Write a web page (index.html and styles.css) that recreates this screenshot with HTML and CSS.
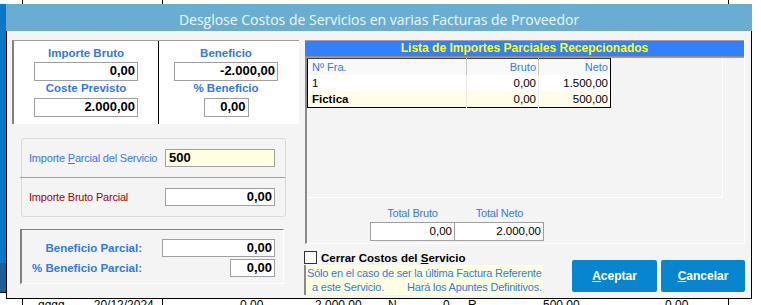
FILE: index.html
```html
<!DOCTYPE html>
<html lang="es">
<head>
  <meta charset="UTF-8">
  <title>Desglose Costos de Servicios</title>
  <link rel="stylesheet" href="styles.css">
</head>
<body>

  <!-- ventana de fondo -->
  <div class="desk">
    <div class="desk-side"></div>
    <div class="desk-col col-gap"></div>
    <div class="desk-col col-a">
      <div class="desk-row row-a"><span>gggg</span><span>20/12/2024</span></div>
    </div>
    <div class="desk-col col-b">
      <div class="desk-row row-b">
        <span>0,00</span><span>2.000,00</span><span>N</span><span>0</span><span>R</span><span>500,00</span><span>0,00</span>
      </div>
    </div>
    <div class="desk-col col-c"></div>
  </div>

  <div class="dlg">
    <div class="dlg-title">Desglose Costos de Servicios en varias Facturas de Proveedor</div>

    <div class="dlg-body">

      <div class="left-col">
        <div class="summary">
          <div class="sum-col sum-left">
            <div class="sum-label">Importe Bruto</div>
            <div class="field sum-field">0,00</div>
            <div class="sum-label">Coste Previsto</div>
            <div class="field sum-field second">2.000,00</div>
          </div>
          <div class="sum-col sum-right">
            <div class="sum-label">Beneficio</div>
            <div class="field sum-field">-2.000,00</div>
            <div class="sum-label">% Beneficio</div>
            <div class="field sum-field second small">0,00</div>
          </div>
        </div>

        <div class="partial">
          <div class="partial-row">
            <span class="lbl blue">Importe <u>P</u>arcial del Servicio</span>
            <div class="field partial-field input-yellow">500</div>
          </div>
          <div class="partial-row divided">
            <span class="lbl red">Importe Bruto Parcial</span>
            <div class="field partial-field">0,00</div>
          </div>
        </div>

        <div class="benefit">
          <span class="ben-label">Beneficio Parcial:</span>
          <div class="field ben-field">0,00</div>
          <span class="ben-label">% Beneficio Parcial:</span>
          <div class="field ben-field small">0,00</div>
        </div>
      </div>

      <div class="right-col">
        <div class="panel">
          <div class="panel-title">Lista de Importes Parciales Recepcionados</div>
          <div class="list-body">
            <div class="grid-area">
              <table class="grid">
                <tr class="grid-head">
                  <td class="c-fra">Nº Fra.</td>
                  <td class="num">Bruto</td>
                  <td class="num">Neto</td>
                </tr>
                <tr>
                  <td>1</td>
                  <td class="num">0,00</td>
                  <td class="num">1.500,00</td>
                </tr>
                <tr class="row-yellow">
                  <td class="bold">Fictica</td>
                  <td class="num">0,00</td>
                  <td class="num">500,00</td>
                </tr>
              </table>
            </div>
            <div class="totals">
              <div class="tot">
                <div class="lbl blue">Total Bruto</div>
                <div class="tot-field tot-bruto">0,00</div>
              </div>
              <div class="tot">
                <div class="lbl blue">Total Neto</div>
                <div class="tot-field tot-neto">2.000,00</div>
              </div>
            </div>
          </div>
        </div>

        <div class="dlg-foot">
          <div class="foot-left">
            <label class="check-row">
              <span class="check-box"></span>
              <span class="check-text">Cerrar Costos del <u>S</u>ervicio</span>
            </label>
            <div class="note">
              <div>Sólo en el caso de ser la última Factura Referente</div>
              <div class="note-2">a este Servicio.<span class="note-gap">Hará los Apuntes Definitivos.</span></div>
            </div>
          </div>
          <div class="buttons">
            <button class="btn btn-ok"><u>A</u>ceptar</button>
            <button class="btn btn-cancel"><u>C</u>ancelar</button>
          </div>
        </div>
      </div>

    </div>
  </div>

</body>
</html>
```

FILE: styles.css
```css
body {
  margin: 0;
  width: 761px;
  height: 305px;
  overflow: hidden;
  position: relative;
  background: #fff;
  font-family: "Liberation Sans", Arial, sans-serif;
}

/* ---- fondo ---- */
.desk {
  display: flex;
  height: 305px;
}

.desk-side {
  width: 6px;
  background: linear-gradient(to bottom, #fff 0 4px, #0a78c8 4px 263px, #1b5f95 263px 292px, #000 292px 293px, #fff 293px);
}

.desk-col {
  box-sizing: border-box;
  border-right: 1px solid #000;
}

.col-gap { width: 17px; }
.col-a { width: 140px; }
.col-b { width: 566px; }
.col-c { flex: 1; border-right: none; }

.desk-row {
  display: flex;
  padding-top: 297px;
  font-size: 12px;
  line-height: 16px;
  color: #000;
}

.row-a { padding-left: 15px; gap: 29px; }
.row-b { padding-left: 77px; }
.row-b span:nth-child(1) { width: 75px; }
.row-b span:nth-child(2) { width: 73px; }
.row-b span:nth-child(3) { width: 55px; }
.row-b span:nth-child(4) { width: 25px; }
.row-b span:nth-child(5) { width: 75px; }
.row-b span:nth-child(6) { width: 122px; }

/* ---- dialogo ---- */
.dlg {
  position: absolute;
  left: 6px;
  top: 4px;
  width: 746px;
  height: 295px;
}

.dlg-title {
  height: 27px;
  box-sizing: border-box;
  padding-top: 4px;
  background: #69aed2;
  color: #eef6fb;
  font-family: "Open Sans", sans-serif;
  font-size: 14px;
  line-height: 23px;
  text-align: center;
}

.dlg-body {
  box-sizing: border-box;
  height: 268px;
  border: 1px solid #000;
  border-top: none;
  background: #f4f4f4;
  display: grid;
  grid-template-columns: 287px 441px;
  column-gap: 5px;
  padding: 9px 6px 0 5px;
}

.field {
  box-sizing: border-box;
  border: 1px solid #a0a0a0;
  background: #fff;
  color: #000;
  font-size: 13px;
  font-weight: bold;
  line-height: 16px;
  text-align: right;
  padding-right: 2px;
}

.lbl {
  font-size: 11px;
  line-height: 14px;
  letter-spacing: -0.2px;
}

.blue { color: #2f78f0; }
.red { color: #a80000; }

/* resumen */
.summary {
  box-sizing: border-box;
  height: 84px;
  background: #fff;
  border-top: 1px solid #a0a0a0;
  border-left: 2px solid #808080;
  display: flex;
}

.sum-col {
  display: flex;
  flex-direction: column;
  align-items: center;
  padding-top: 5px;
}

.sum-left {
  width: 144px;
  border-right: 1px solid #000;
}

.sum-right {
  flex: 1;
  padding-right: 6px;
}

.sum-label {
  color: #2f78f0;
  font-size: 11.5px;
  font-weight: bold;
  line-height: 14px;
}

.sum-field {
  width: 104px;
  height: 19px;
  margin-top: 2px;
}

.sum-field.second { margin-top: 3px; }
.sum-field.small { width: 45px; }

/* importe parcial */
.partial {
  margin: 14px 0 0 9px;
  width: 263px;
  border: 1px solid #dadada;
  border-radius: 3px;
}

.partial-row {
  height: 38px;
  display: flex;
  align-items: center;
  padding: 0 10px 0 7px;
}

.partial-row.divided {
  border-top: 1px solid #a0a0a0;
  margin-left: -2px;
  padding-left: 9px;
}

.partial-row .lbl { flex: 1; }

.partial-field {
  width: 110px;
  height: 18px;
}

.input-yellow {
  background: #fffde2;
  text-align: left;
  padding-left: 3px;
}

/* beneficio parcial */
.benefit {
  box-sizing: border-box;
  margin: 12px 0 0 8px;
  width: 264px;
  height: 55px;
  border-top: 1px solid #808080;
  border-left: 2px solid #808080;
  border-right: 1px solid #fff;
  border-bottom: 1px solid #fff;
  display: grid;
  grid-template-columns: 120px 113px;
  column-gap: 20px;
  row-gap: 2px;
  padding: 9px 8px 0 0;
  align-content: start;
}

.ben-label {
  color: #2f78f0;
  font-size: 11.5px;
  font-weight: bold;
  line-height: 18px;
  text-align: right;
}

.ben-field { height: 18px; }
.ben-field.small { width: 45px; justify-self: end; }

/* lista */
.panel {
  box-sizing: border-box;
  margin-left: 1px;
  height: 204px;
  border-right: 1px solid #fff;
}

.panel-title {
  box-sizing: border-box;
  height: 17px;
  border-top: 1px solid #a0a0a0;
  border-bottom: 1px solid #8c8c8c;
  background: #3380ff;
  color: #ffff00;
  font-size: 12px;
  font-weight: bold;
  line-height: 15px;
  text-align: center;
}

.list-body {
  box-sizing: border-box;
  height: 187px;
  border-top: 1px solid #a0a0a0;
  border-left: 2px solid #8a8a8a;
  border-bottom: 1px solid #fff;
}

.grid-area {
  box-sizing: border-box;
  width: 416px;
  height: 140px;
  border-right: 1px solid #fff;
  border-bottom: 1px solid #fff;
}

.grid {
  border-collapse: collapse;
  border: 1px solid #000;
  border-top-color: #404040;
  font-size: 11.5px;
}

.grid td {
  height: 16px;
  padding: 0 2px 0 4px;
  border-right: 1px solid #ececec;
  line-height: 15px;
  white-space: nowrap;
}

.grid td:last-child { border-right: none; }

.grid td.c-fra { width: 152px; }
.grid td.num { width: 65px; text-align: right; }

.grid-head td {
  background: #f9f9f9;
  color: #2f78f0;
  border-right-color: #c4c4c4;
  font-size: 11px;
}

.grid tr:nth-child(2) td { background: #fff; }
.row-yellow td { background: #fffde6; }
.bold { font-weight: bold; }

.totals {
  display: flex;
  margin-left: 63px;
  padding-top: 8px;
}

.tot {
  display: flex;
  flex-direction: column;
  align-items: center;
}

.tot .lbl { margin-bottom: 2px; }

.tot-field {
  box-sizing: border-box;
  height: 19px;
  border: 1px solid #a0a0a0;
  background: #fff;
  font-size: 11.5px;
  line-height: 17px;
  text-align: right;
  padding-right: 2px;
}

.tot-bruto { width: 85px; }
.tot-neto { width: 89px; border-left: none; }

/* pie */
.dlg-foot {
  display: flex;
  justify-content: space-between;
}

.foot-left { width: 239px; }

.check-row {
  display: flex;
  align-items: center;
  gap: 4px;
  margin-top: 7px;
  height: 13px;
}

.check-box {
  box-sizing: border-box;
  width: 13px;
  height: 13px;
  border: 1px solid #333;
  background: #fff;
}

.check-text {
  font-size: 11.5px;
  font-weight: bold;
}

.note {
  box-sizing: border-box;
  margin-top: 1px;
  height: 30px;
  background: #ffffe1;
  border-left: 2px solid #8a8a8a;
  padding: 1px 0 0 1px;
  color: #2f78f0;
  font-size: 11px;
  line-height: 14px;
  letter-spacing: -0.2px;
  white-space: nowrap;
}

.note-2 { padding-left: 5px; }
.note-gap { margin-left: 23px; }

.buttons {
  display: flex;
  gap: 4px;
  margin-top: 16px;
}

.btn {
  height: 32px;
  border: none;
  border-radius: 2px;
  background: #0885cf;
  color: #fff;
  font-family: "Liberation Sans", Arial, sans-serif;
  font-size: 12px;
  font-weight: bold;
  padding: 0;
}

.btn-ok { width: 85px; }
.btn-cancel { width: 84px; }
```
